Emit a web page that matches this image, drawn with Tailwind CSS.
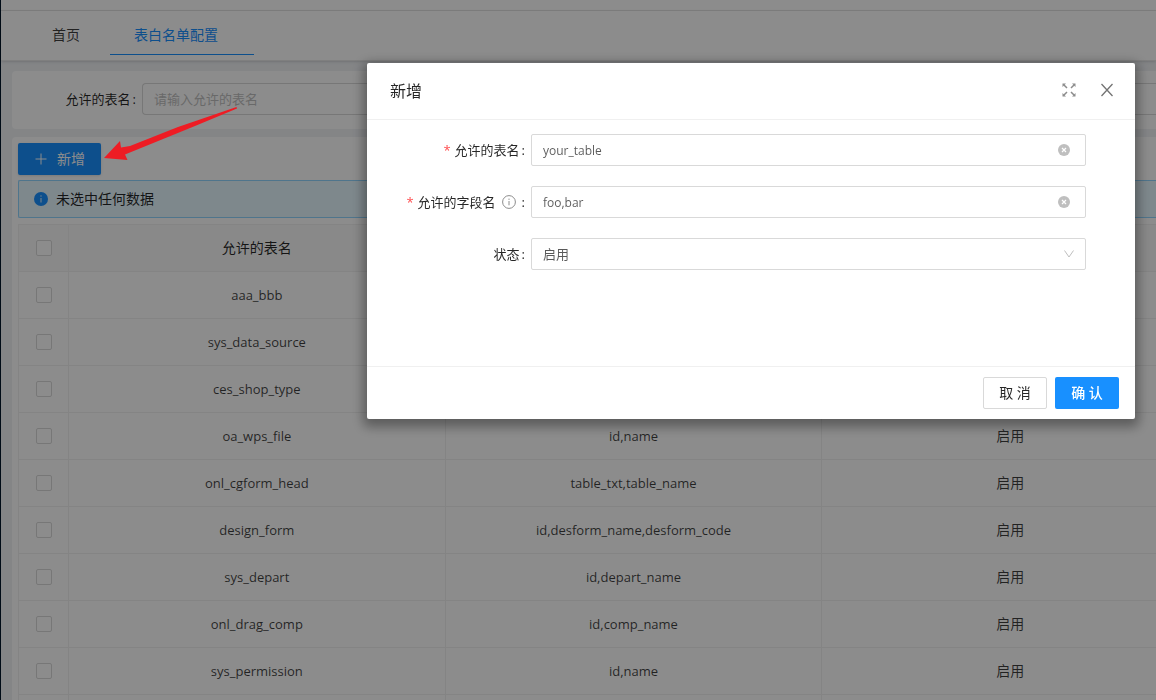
<!DOCTYPE html>
<html lang="zh-CN">
<head>
  <meta charset="UTF-8" />
  <meta name="viewport" content="width=device-width, initial-scale=1.0" />
  <title>表白名单配置</title>
  <script src="https://cdn.jsdelivr.net/npm/@tailwindcss/browser@4"></script>
</head>
<body class="h-screen overflow-hidden bg-[#f0f2f5] font-['Open_Sans','Noto_Sans_CJK_SC',sans-serif] text-sm text-black/85">

  <div class="flex h-full overflow-hidden">
    <!-- sidebar edge -->
    <aside class="w-px shrink-0 bg-[#001529]"></aside>

    <div class="min-w-0 flex-1">
      <header class="h-[11px] border-b border-[#e4e4e4] bg-white"></header>

      <!-- tabs -->
      <nav class="flex h-[50px] items-start border-b border-[#e8e8e8] bg-white pl-[27px] shadow-sm">
        <a href="#" class="flex h-11 items-center px-6 pt-1 text-black/75">首页</a>
        <a href="#" class="ml-1.5 flex h-11 w-36 items-center border-b border-[#1890ff] pl-6 pt-1 text-[#1890ff]">表白名单配置</a>
      </nav>

      <main class="space-y-2 pl-[11px] pt-2.5">
        <!-- search -->
        <form class="flex rounded-l-sm bg-white pb-3.5 pl-2 pt-3 text-[13px]">
          <label for="q" class="flex w-[122px] shrink-0 items-center justify-end gap-0.5 pr-1.5">允许的表名<span>:</span></label>
          <input id="q" type="text" placeholder="请输入允许的表名" class="h-8 min-w-0 flex-1 rounded-l-sm border border-r-0 border-[#d9d9d9] px-[11px] placeholder:text-[#bfbfbf]" />
        </form>

        <section class="rounded-l-sm bg-white pl-1.5 pt-1.5">
          <button type="button" class="flex h-8 items-center gap-[9px] rounded-xs bg-[#1890ff] px-4 text-white shadow-sm">
            <svg class="size-3.5" viewBox="0 0 14 14" fill="none" stroke="currentColor"><path d="M7 1.5v11M1.5 7h11" /></svg>
            新增
          </button>

          <div class="mt-[5px] flex h-[38px] items-center gap-2 rounded-l-xs border border-r-0 border-[#91d5ff] bg-[#e6f7ff] pl-[15px]">
            <svg class="size-3.5" viewBox="0 0 14 14"><circle cx="7" cy="7" r="7" fill="#1890ff" /><path d="M7 6v4.5M7 3.3v1.4" stroke="#e6f7ff" /></svg>
            未选中任何数据
          </div>

          <div class="mt-1.5 overflow-hidden">
            <table class="w-[1181px] table-fixed border-collapse text-center">
              <colgroup>
                <col class="w-[50px]" />
                <col />
                <col />
                <col />
              </colgroup>
              <thead>
                <tr class="h-[47px] bg-[#fafafa]">
                  <th class="border border-[#f0f0f0] font-normal"><input type="checkbox" aria-label="全选" class="block mx-auto size-4 appearance-none rounded-xs border border-[#d9d9d9] bg-white" /></th>
                  <th class="border border-[#f0f0f0] font-normal">允许的表名</th>
                  <th class="border border-[#f0f0f0] font-normal">允许的字段名</th>
                  <th class="border border-[#f0f0f0] font-normal">状态</th>
                </tr>
              </thead>
              <tbody id="rows"></tbody>
            </table>
          </div>
        </section>
      </main>
    </div>
  </div>

  <!-- modal -->
  <div class="fixed inset-0 flex items-start justify-end bg-black/45 pr-[21px] pt-[63px]">
    <div role="dialog" aria-labelledby="dlg-title" class="w-full max-w-3xl rounded-xs bg-white text-[13px] shadow-[0_4px_12px_4px_rgba(0,0,0,0.35)]">
      <div class="flex h-[57px] items-center border-b border-[#f0f0f0] pl-[23px] pr-5">
        <h2 id="dlg-title" class="flex-1 text-base">新增</h2>
        <button type="button" aria-label="全屏" class="mr-[23px] pb-0.5 text-[#8c8c8c]">
          <svg class="size-3.5" viewBox="0 0 14 14" fill="currentColor" stroke="currentColor">
            <path d="M2 2l3 3M12 2l-3 3M2 12l3-3M12 12l-3-3" stroke-width="1.5" />
            <path d="M.5.5h3.500l-3.500 3.500zM13.500.5v3.500l-3.500-3.500zM.5 13.500v-3.500l3.500 3.500zM13.500 13.500h-3.500l3.500-3.500z" stroke="none" />
          </svg>
        </button>
        <button type="button" aria-label="关闭" class="pb-0.5 text-[#737373]">
          <svg class="size-4" viewBox="0 0 16 16" fill="none" stroke="currentColor" stroke-width="1.3"><path d="M2.500 2l11 12M13.500 2l-11 12" /></svg>
        </button>
      </div>

      <form class="flex min-h-[246px] flex-col gap-5 pr-[49px] pt-3.5">
        <div class="flex items-center">
          <label for="table" class="flex w-[164px] items-center justify-end gap-0.5 pr-1.5"><span class="mr-0.5 text-[#ff4d4f]">*</span>允许的表名<span>:</span></label>
          <div class="relative flex-1">
            <input id="table" type="text" value="your_table" class="block h-8 w-full rounded-xs border border-[#d9d9d9] px-[11px] text-xs text-black/65" />
            <svg class="absolute right-4 top-2.5 size-3" viewBox="0 0 12 12"><circle cx="6" cy="6" r="6" fill="#bfbfbf" /><path d="M4 4l4 4M8 4L4 8" stroke="#fff" stroke-width="1.2" /></svg>
          </div>
        </div>
        <div class="flex items-center">
          <label for="fields" class="flex w-[164px] items-center justify-end gap-0.5 pr-1.5"><span class="mr-0.5 text-[#ff4d4f]">*</span>允许的字段名
            <svg class="mx-1 size-3.5" viewBox="0 0 14 14" fill="none" stroke="#8c8c8c"><circle cx="7" cy="7" r="6.400" /><path d="M7 6v4.300M7 3.600v1.300" /></svg><span>:</span></label>
          <div class="relative flex-1">
            <input id="fields" type="text" value="foo,bar" class="block h-8 w-full rounded-xs border border-[#d9d9d9] px-[11px] text-xs text-black/65" />
            <svg class="absolute right-4 top-2.5 size-3" viewBox="0 0 12 12"><circle cx="6" cy="6" r="6" fill="#bfbfbf" /><path d="M4 4l4 4M8 4L4 8" stroke="#fff" stroke-width="1.2" /></svg>
          </div>
        </div>
        <div class="flex items-center">
          <label for="status" class="flex w-[164px] items-center justify-end gap-0.5 pr-1.5">状态<span>:</span></label>
          <div class="relative flex-1">
            <select id="status" class="block h-8 w-full appearance-none rounded-xs border border-[#d9d9d9] px-[11px] text-black/65">
              <option>启用</option>
              <option>禁用</option>
            </select>
            <svg class="pointer-events-none absolute right-[11px] top-2.5 size-3" viewBox="0 0 12 12" fill="none" stroke="#bfbfbf"><path d="M1.500 2.500L6 9l4.500-6.500" /></svg>
          </div>
        </div>
      </form>

      <div class="flex justify-end gap-2 border-t border-[#f0f0f0] px-4 py-2.5 text-sm">
        <button type="button" class="h-8 w-16 rounded-xs border border-[#d9d9d9]">取 消</button>
        <button type="button" class="h-8 w-16 rounded-xs bg-[#1890ff] font-medium text-white">确 认</button>
      </div>
    </div>
  </div>

  <!-- pointer to the add button -->
  <svg class="pointer-events-none absolute left-[104px] top-[107px] h-[55px] w-[134px]" viewBox="0 0 134 55" fill="#ee1c24">
    <path d="M0 51L16 34L17 40.500L26 39L74 20L132.500 0L133 1.500L91 19L21 47.500L23.500 53Z" />
  </svg>

  <script>
    const rows = [
      ["aaa_bbb", "id,name"],
      ["sys_data_source", "id,name"],
      ["ces_shop_type", "id,name"],
      ["oa_wps_file", "id,name"],
      ["onl_cgform_head", "table_txt,table_name"],
      ["design_form", "id,desform_name,desform_code"],
      ["sys_depart", "id,depart_name"],
      ["onl_drag_comp", "id,comp_name"],
      ["sys_permission", "id,name"],
      ["sys_dict", "id,dict_name"]
    ];

    document.getElementById("rows").innerHTML = rows.map(([name, fields]) => `
      <tr class="h-[47px] text-black/75">
        <td class="border border-[#f0f0f0]"><input type="checkbox" aria-label="${name}" class="block mx-auto size-4 appearance-none rounded-xs border border-[#d9d9d9] bg-white" /></td>
        <td class="border border-[#f0f0f0] text-[13px]">${name}</td>
        <td class="border border-[#f0f0f0] text-[13px]">${fields}</td>
        <td class="border border-[#f0f0f0]">启用</td>
      </tr>`).join("");
  </script>
</body>
</html>
